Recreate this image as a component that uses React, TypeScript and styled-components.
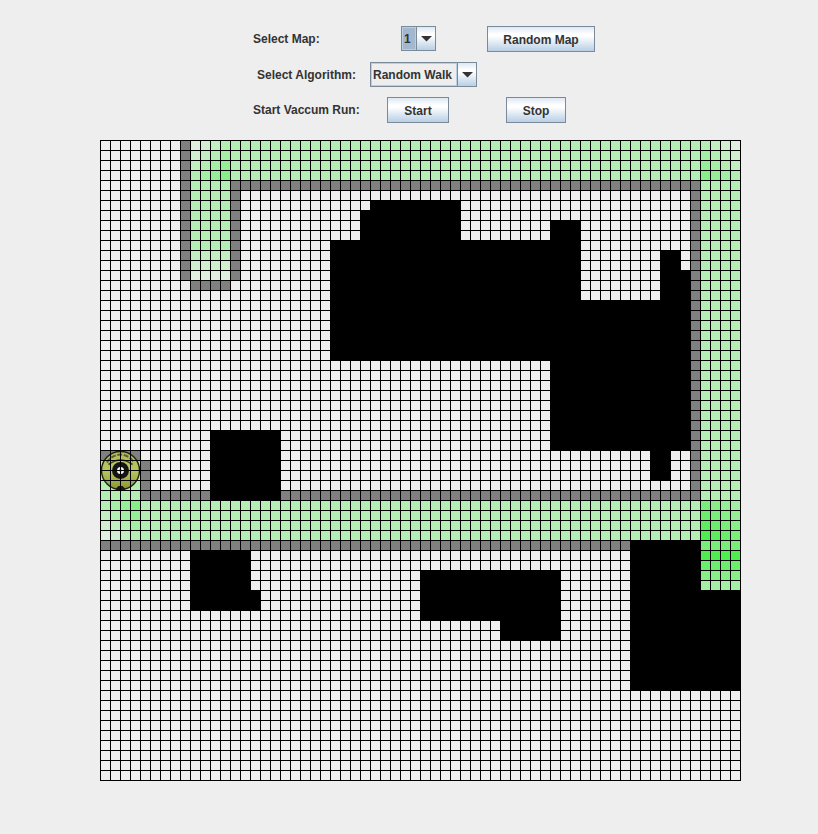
import React from "react";
import styled, { createGlobalStyle } from "styled-components";

const GlobalStyle = createGlobalStyle`
  body {
    margin: 0;
    background: #eeeeee;
    color: #333333;
    font: bold 12px/16px "Liberation Sans", Arial, sans-serif;
  }
`;

const Page = styled.main`
  display: flex;
  flex-direction: column;
  align-items: center;
  gap: 17px;
  padding: 26px 0 53px;
`;

const Controls = styled.form`
  display: flex;
  flex-direction: column;
  gap: 10px;
  padding-left: 30px;
`;

const ControlRow = styled.div<{ $indent?: number }>`
  display: flex;
  align-items: flex-start;
  min-height: 25px;
  padding-left: ${(p) => p.$indent ?? 0}px;
`;

const Caption = styled.label<{ $width: number }>`
  width: ${(p) => p.$width}px;
  padding-top: 2px;
  line-height: 23px;
  white-space: nowrap;
`;

const RowTitle = styled.span<{ $width: number }>`
  width: ${(p) => p.$width}px;
  padding-top: 2px;
  line-height: 23px;
  white-space: nowrap;
`;

const metal = "linear-gradient(#dde8f3, #ffffff 30%, #ffffff 38%, #b8cfe5)";

const Button = styled.button<{ $width: number; $before?: number }>`
  width: ${(p) => p.$width}px;
  height: 26px;
  margin: 0 0 0 ${(p) => p.$before ?? 0}px;
  padding: 1px 0 0;
  border: 1px solid #7a8a99;
  border-radius: 0;
  background: ${metal};
  color: inherit;
  font: inherit;
  white-space: nowrap;
`;

const Combo = styled.div<{ $width: number }>`
  position: relative;
  box-sizing: border-box;
  width: ${(p) => p.$width}px;
  height: 25px;
  border: 1px solid #7a8a99;
`;

const Select = styled.select<{ $active?: boolean }>`
  appearance: none;
  box-sizing: border-box;
  width: calc(100% - 19px);
  height: 23px;
  display: block;
  margin: 0;
  padding: 0 0 0 1px;
  border: 1px solid #b8cfe5;
  border-radius: 0;
  outline: none;
  background: ${(p) => (p.$active ? "#a3b8cc" : "#eeeeee")};
  color: inherit;
  font: inherit;
`;

const ComboArrow = styled.span`
  position: absolute;
  top: 0;
  right: 0;
  bottom: 0;
  width: 18px;
  display: flex;
  align-items: center;
  justify-content: center;
  border-left: 1px solid #7a8a99;
  background: ${metal};
  box-sizing: content-box;
  pointer-events: none;
`;

const MapArea = styled.section`
  box-sizing: border-box;
  padding-left: 23px;
`;

const FloorMap = styled.svg`
  display: block;
`;

const CELLS = 64;
const CELL = 10;
const SIZE = CELLS * CELL;

type Block = [x: number, y: number, w: number, h: number];

const walls: Block[] = [
  [8, 0, 1, 14],
  [9, 14, 4, 1],
  [13, 4, 1, 10],
  [13, 4, 47, 1],
  [59, 4, 1, 32],
  [4, 35, 56, 1],
  [4, 32, 1, 4],
  [0, 31, 4, 1],
  [0, 40, 53, 1],
];

const obstacles: Block[] = [
  [27, 6, 9, 4],
  [26, 7, 10, 3],
  [23, 10, 25, 12],
  [45, 8, 3, 3],
  [45, 16, 14, 15],
  [56, 11, 2, 5],
  [58, 13, 1, 3],
  [55, 31, 2, 3],
  [11, 29, 7, 7],
  [9, 41, 6, 6],
  [15, 45, 1, 2],
  [32, 43, 14, 5],
  [40, 48, 6, 2],
  [53, 40, 7, 15],
  [60, 45, 4, 10],
];

const visits: { x: number; y: number; n: number; w: number; h: number }[] = [];
const visit = (n: number, [x, y, w, h]: Block) => visits.push({ x, y, w, h, n });

visit(4, [9, 4, 4, 7]);
visit(3, [9, 11, 4, 1]);
visit(2, [9, 12, 4, 1]);
visit(1, [9, 13, 4, 1]);
visit(4, [13, 0, 47, 4]);
visit(4, [60, 4, 4, 32]);
visit(4, [4, 36, 56, 4]);
visit(4, [0, 32, 4, 4]);
for (let r = 0; r < 4; r++) {
  for (let c = 0; c < 4; c++) {
    visit(1 + c + r, [9 + c, r, 1, 1]);
    visit(4 - c + r, [60 + c, r, 1, 1]);
    visit(4 + c - r, [c, 36 + r, 1, 1]);
    visit(8 - c + r, [60 + c, 36 + r, 1, 1]);
  }
}
[8, 11, 9, 7, 5].forEach((n, i) => visit(n, [60, 40 + i, 4, 1]));

const shade = (n: number) => {
  const c = Math.round(238 - 14.6 * n);
  return `rgb(${c}, 238, ${c})`;
};

const toPath = (blocks: Block[]) =>
  blocks
    .map(([x, y, w, h]) => `M${x * CELL} ${y * CELL}h${w * CELL}v${h * CELL}h${-w * CELL}z`)
    .join("");

const gridLines = Array.from(
  { length: CELLS + 1 },
  (_, i) => `M${i * CELL + 0.5} 0v${SIZE + 1}M0 ${i * CELL + 0.5}h${SIZE + 1}`
).join("");

function Vacuum() {
  return (
    <g transform="translate(20.5 330.5)">
      <circle r="19" fill="url(#shell)" stroke="#20220f" strokeWidth="1.4" />
      <path d="M-13.5 -8A15.5 15.5 0 0 1 13.5 -8" fill="none" stroke="#5c6032" strokeWidth="2" strokeDasharray="5 1.5" />
      <path d="M-12 -6Q0 -15 12 -6" fill="none" stroke="#3c3f20" strokeWidth="1.6" />
      <circle r="8.5" fill="#151515" />
      <circle r="3.5" fill="#f2f4f0" />
      <circle r="1.2" fill="#343434" />
      <path d="M-5 18.5L-2 15.5H2L5 18.5Q0 20 -5 18.5Z" fill="#17190e" />
    </g>
  );
}

function DownArrow() {
  return (
    <svg width="12" height="6" viewBox="0 0 12 6" aria-hidden="true">
      <path d="M1 0H12L6.5 5.5Z" fill="#333333" />
    </svg>
  );
}

export default function App() {
  return (
    <>
      <GlobalStyle />
      <Page>
        <Controls onSubmit={(e) => e.preventDefault()}>
          <ControlRow>
            <Caption $width={148} htmlFor="map">Select Map:</Caption>
            <Combo $width={35}>
              <Select id="map" $active defaultValue="1">
                <option>1</option>
                <option>2</option>
                <option>3</option>
              </Select>
              <ComboArrow><DownArrow /></ComboArrow>
            </Combo>
            <Button type="button" $width={108} $before={51}>Random Map</Button>
          </ControlRow>
          <ControlRow $indent={4}>
            <Caption $width={113} htmlFor="algorithm">Select Algorithm:</Caption>
            <Combo $width={107}>
              <Select id="algorithm" defaultValue="Random Walk">
                <option>Random Walk</option>
              </Select>
              <ComboArrow><DownArrow /></ComboArrow>
            </Combo>
          </ControlRow>
          <ControlRow>
            <RowTitle $width={134}>Start Vaccum Run:</RowTitle>
            <Button type="button" $width={62}>Start</Button>
            <Button type="button" $width={60} $before={57}>Stop</Button>
          </ControlRow>
        </Controls>
        <MapArea>
          <FloorMap
            width={SIZE + 1}
            height={SIZE + 1}
            viewBox={`0 0 ${SIZE + 1} ${SIZE + 1}`}
            role="img"
            aria-label="Floor map"
          >
            <defs>
              <linearGradient id="shell" x1="0" y1="0" x2="0" y2="1">
                <stop offset="0" stopColor="#b3bd58" />
                <stop offset="0.5" stopColor="#b9c660" />
                <stop offset="1" stopColor="#8c962f" />
              </linearGradient>
            </defs>
            {visits.map((v, i) => (
              <rect
                key={i}
                x={v.x * CELL}
                y={v.y * CELL}
                width={v.w * CELL}
                height={v.h * CELL}
                fill={shade(v.n)}
              />
            ))}
            <path d={toPath(walls)} fill="#808080" />
            <path d={toPath(obstacles)} fill="#000000" />
            <Vacuum />
            <path d={gridLines} stroke="#000000" fill="none" shapeRendering="crispEdges" />
          </FloorMap>
        </MapArea>
      </Page>
    </>
  );
}
